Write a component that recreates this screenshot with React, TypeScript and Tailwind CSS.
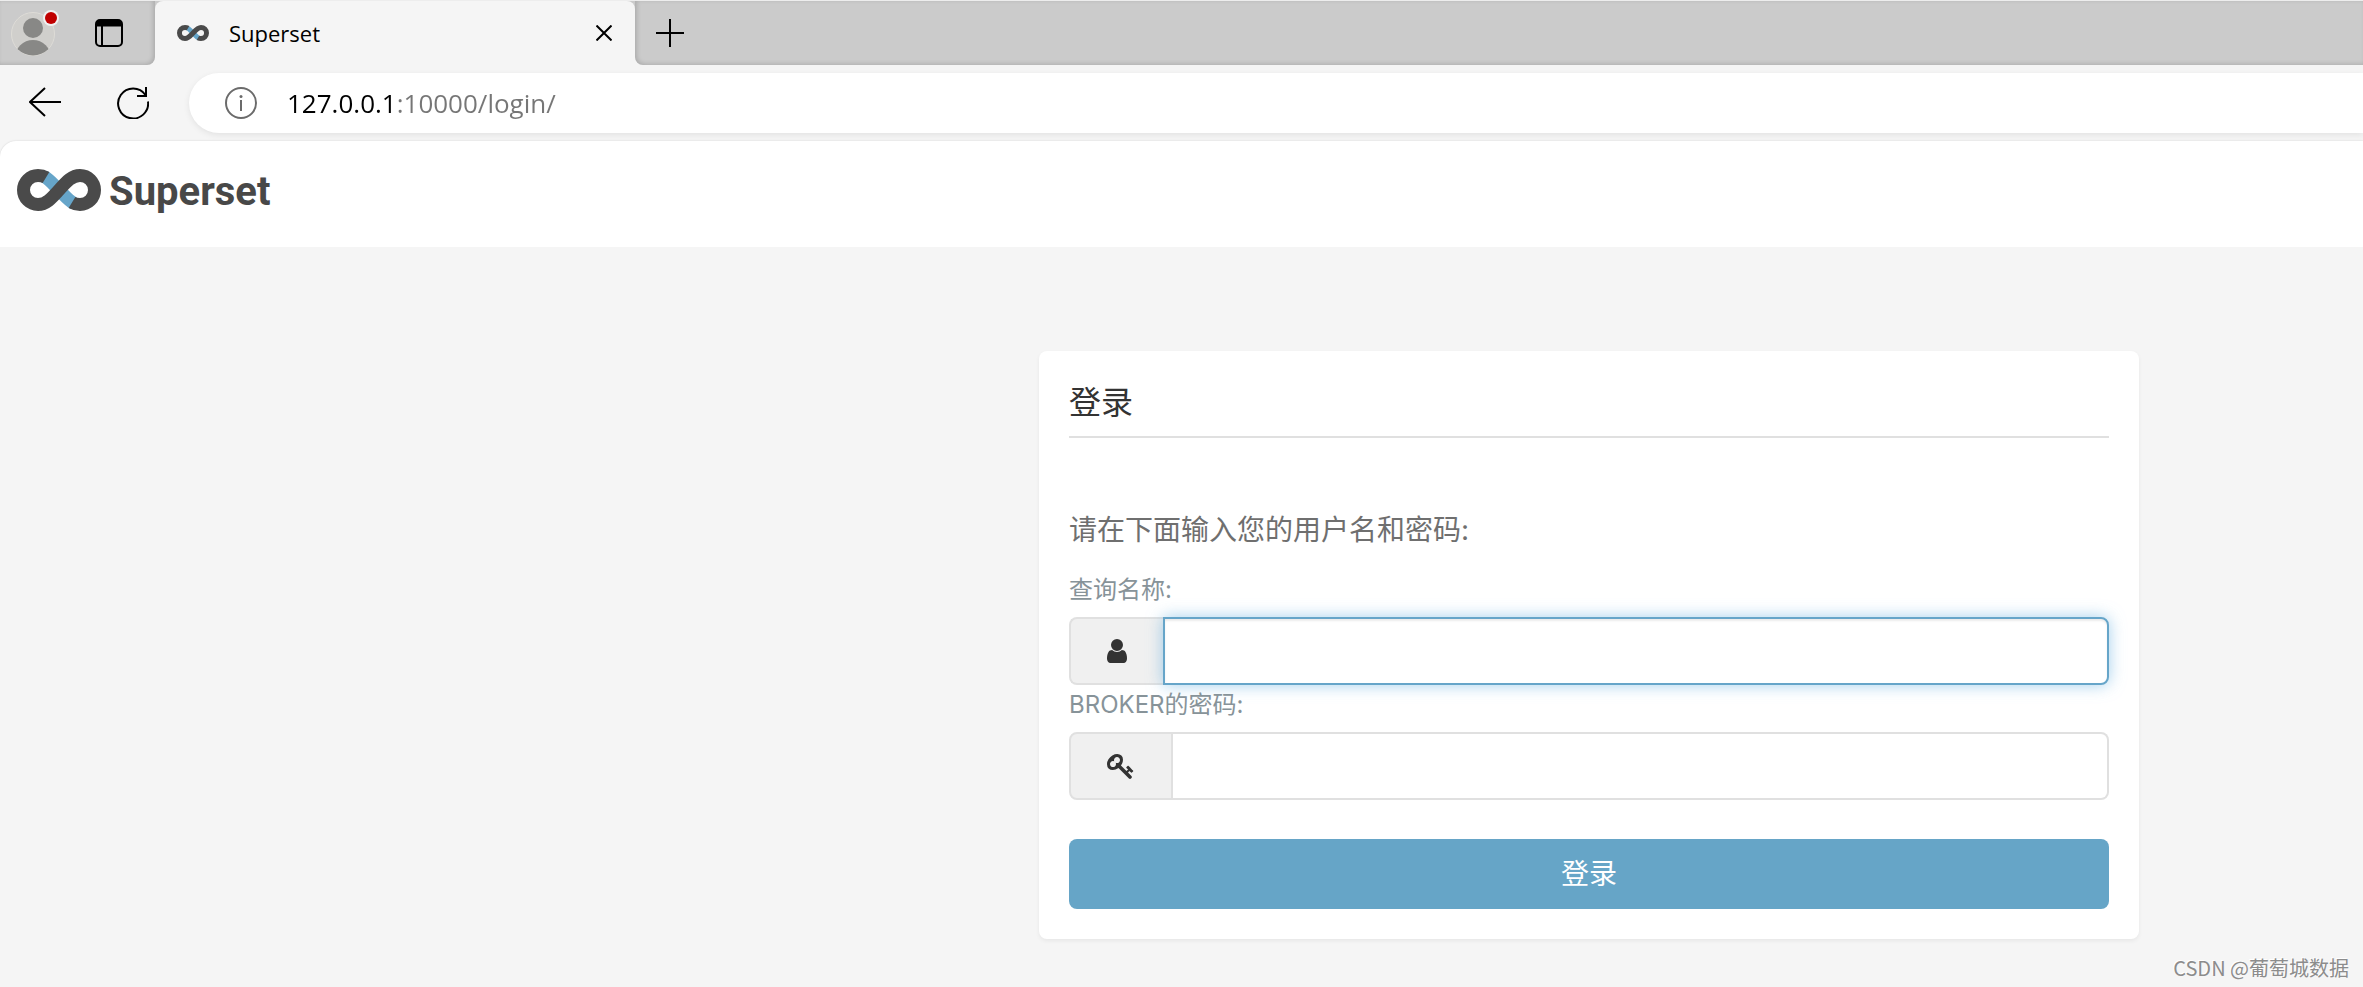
import React from "react";

function SupersetMark({ className }: { className: string }) {
  return (
    <svg className={className} viewBox="17 169 84 42" fill="none" strokeWidth="13" aria-hidden="true">
      <path d="M44 176.5C49 179 53 184 59 190S69 201 74 203.5" stroke="#66a5c9" />
      <path
        d="M46 177.5C43.500 176 41 175.500 38 175.500A14.500 14.500 0 0 0 38 204.500C46 204.500 51 199 59 190S72 175.500 80 175.500A14.500 14.500 0 0 1 80 204.500C77 204.500 74.500 204 72 202.500"
        stroke="#4a4a4a"
      />
    </svg>
  );
}

function TabStrip() {
  return (
    <div className="flex h-[65px] border-t border-[#ededed]">
      <div className="flex w-[155px] items-center rounded-br-lg bg-[#cbcbcb] pl-[11px] shadow-[inset_-2px_-1px_4px_rgba(0,0,0,0.15)]">
        <button type="button" aria-label="Profile" className="mr-[36px]">
          <svg className="h-[48px] w-[48px]" viewBox="0 0 48 48" aria-hidden="true">
            <defs>
              <clipPath id="avatar">
                <circle cx="22" cy="25" r="21.500" />
              </clipPath>
            </defs>
            <circle cx="22" cy="25" r="21.500" fill="#d0cfcc" stroke="#dedcd7" />
            <circle cx="22" cy="19" r="10" fill="#888886" />
            <circle cx="22" cy="49" r="18" fill="#888886" clipPath="url(#avatar)" />
            <circle cx="40" cy="9" r="8" fill="#f1f1f1" />
            <circle cx="40" cy="9" r="6" fill="#c00000" />
          </svg>
        </button>
        <button type="button" aria-label="Tab actions">
          <svg className="h-[28px] w-[28px]" viewBox="0 0 28 28" fill="none" stroke="#000" strokeWidth="2" aria-hidden="true">
            <rect x="1" y="1" width="26" height="26" rx="4" />
            <path d="M2 4.500h24" strokeWidth="6" />
            <path d="M7 7v20" />
          </svg>
        </button>
      </div>
      <div className="w-[480px] bg-linear-to-b from-[#cbcbcb] from-50% to-[#f5f5f5] to-50%">
        <div className="flex h-full items-center rounded-t-lg bg-[#f5f5f5] pr-[23px] pl-[22px]">
          <SupersetMark className="h-[16px] w-[32px]" />
          <span className="ml-[20px] flex-1 font-['Open_Sans','Noto_Sans',sans-serif] text-[22px] leading-[32px]">Superset</span>
          <button type="button" aria-label="Close tab">
            <svg className="h-[16px] w-[16px]" viewBox="0 0 16 16" stroke="#000" strokeWidth="2" aria-hidden="true">
              <path d="M0.500 0.500L15.500 15.500M15.500 0.500L0.500 15.500" />
            </svg>
          </button>
        </div>
      </div>
      <div className="flex flex-1 items-center rounded-bl-lg bg-[#cbcbcb] pl-[21px] shadow-[inset_2px_-1px_4px_rgba(0,0,0,0.15)]">
        <button type="button" aria-label="New tab">
          <svg className="h-[28px] w-[28px]" viewBox="0 0 28 28" stroke="#000" strokeWidth="2" aria-hidden="true">
            <path d="M14 0v28M0 14h28" />
          </svg>
        </button>
      </div>
    </div>
  );
}

function AddressRow() {
  return (
    <div className="flex h-[76px] items-center pl-[29px]">
      <button type="button" aria-label="Back" className="mr-[56px]">
        <svg className="h-[32px] w-[32px]" viewBox="0 0 32 32" fill="none" stroke="#000" strokeWidth="2" aria-hidden="true">
          <path d="M32 15H1M16 1L1 15l15 14" />
        </svg>
      </button>
      <button type="button" aria-label="Refresh" className="mr-[40px]">
        <svg className="h-[32px] w-[32px]" viewBox="0 0 32 32" fill="none" stroke="#000" strokeWidth="2" aria-hidden="true">
          <path d="M31 14.500A15 15 0 1 1 28.500 8M29 0v9h-9" />
        </svg>
      </button>
      <div className="flex h-[60px] flex-1 items-center rounded-l-full bg-white pl-[36px] shadow-[0_2px_6px_rgba(0,0,0,0.08)]">
        <svg className="h-[32px] w-[32px]" viewBox="0 0 32 32" fill="none" stroke="#6b6b6b" strokeWidth="2" aria-hidden="true">
          <circle cx="16" cy="16" r="15" />
          <path d="M16 13v11" />
          <circle cx="16" cy="9.500" r="1.500" fill="#6b6b6b" stroke="none" />
        </svg>
        <input
          type="text"
          aria-label="Address"
          defaultValue="127.0.0.1:10000/login/"
          className="ml-[30px] h-[40px] flex-1 bg-linear-to-r from-black from-[109px] to-[#767676] to-[109px] bg-clip-text font-['Open_Sans','Noto_Sans',sans-serif] text-[26px] text-transparent caret-black outline-none"
        />
      </div>
    </div>
  );
}

const addon = "flex shrink-0 items-center rounded-l-lg border-2 border-[#e0e0e0] bg-[#f0f0f0] pl-[36px]";
const label = "mb-[11px] block text-[24px] leading-8 text-[#879399]";

function LoginCard() {
  return (
    <form
      className="ml-[43.97%] w-[1100px] rounded-lg bg-white p-[30px] shadow-[0_2px_4px_rgba(0,0,0,0.06)]"
      onSubmit={(e) => e.preventDefault()}
    >
      <h1 className="border-b-2 border-[#e0e0e0] pb-[11px] text-[32px] leading-[44px] text-[#333]">登录</h1>
      <p className="mt-[72px] mb-6 text-[28px] leading-10 text-[#6f6f6f]">请在下面输入您的用户名和密码:</p>

      <label htmlFor="username" className={label}>查询名称:</label>
      <div className="flex h-[68px]">
        <div className={`${addon} w-[94px] border-r-0`}>
          <svg className="h-[28px] w-[20px]" viewBox="256 0 1280 1792" fill="#333" aria-hidden="true">
            <path d="M1536 1399q0 109-62.500 187t-150.500 78h-854q-88 0-150.500-78t-62.500-187q0-85 8.500-160.500t31.500-152 58.500-131 94-89 134.500-34.500q131 128 313 128t313-128q76 0 134.500 34.500t94 89 58.500 131 31.500 152 8.500 160.500zm-256-887q0 159-112.500 271.500t-271.500 112.500-271.500-112.500-112.500-271.500 112.500-271.500 271.500-112.500 271.500 112.500 112.500 271.500z" />
          </svg>
        </div>
        <input
          id="username"
          type="text"
          className="min-w-0 flex-1 rounded-r-lg border-2 border-[#66a5c9] bg-white px-6 text-[28px] shadow-[inset_0_2px_2px_rgba(0,0,0,0.08),0_0_16px_rgba(102,175,223,0.6)] outline-none"
        />
      </div>

      <label htmlFor="password" className={`mt-1 ${label}`}>BROKER的密码:</label>
      <div className="flex h-[68px]">
        <div className={`${addon} w-[104px]`}>
          <svg className="h-[28px] w-[28px]" viewBox="0 0 1792 1792" fill="#333" aria-hidden="true">
            <path d="M832 512q0-80-56-136t-136-56-136 56-56 136q0 42 19 83-41-19-83-19-80 0-136 56t-56 136 56 136 136 56 136-56 56-136q0-42-19-83 41 19 83 19 80 0 136-56t56-136zm851 704q0 17-49 66t-66 49q-9 0-28.500-16t-36.500-33-38.500-40-24.500-26l-96 96 220 220q28 28 28 68 0 42-39 81t-81 39q-40 0-68-28l-671-671q-176 131-365 131-163 0-265.500-102.500t-102.500-265.500q0-160 95-313t248-248 313-95q163 0 265.500 102.500t102.500 265.500q0 189-131 365l355 355 96-96q-3-3-26-24.500t-40-38.500-33-36.500-16-28.500q0-17 49-66t66-49q13 0 23 10 6 6 46 44.500t82 79.500 86.500 86 73 78 28.500 41z" />
          </svg>
        </div>
        <input
          id="password"
          type="password"
          className="min-w-0 flex-1 rounded-r-lg border-2 border-l-0 border-[#e0e0e0] bg-white px-6 text-[28px] outline-none"
        />
      </div>

      <button type="submit" className="mt-[39px] h-[70px] w-full rounded-lg bg-[#66a5c7] text-[28px] leading-10 text-white">
        登录
      </button>
    </form>
  );
}

export default function App() {
  return (
    <div className="relative flex min-h-screen flex-col overflow-hidden bg-[#f5f5f5] font-['Inter','Noto_Sans_CJK_SC',sans-serif]">
      <TabStrip />
      <AddressRow />
      <header className="flex h-[106px] items-start rounded-tl-2xl bg-white pt-[25px] pl-[17px] shadow-[0_0_2px_rgba(0,0,0,0.15)]">
        <a href="/" className="flex items-center gap-2">
          <SupersetMark className="h-[42px] w-[84px]" />
          <span className="pt-1 font-['Roboto',sans-serif] text-[40px] leading-[44px] font-bold text-[#484848]">Superset</span>
        </a>
      </header>
      <main className="flex-1 bg-[#f5f5f5] pt-[104px]">
        <LoginCard />
      </main>
      <div className="absolute right-[14px] bottom-1 font-['Noto_Sans_CJK_SC',sans-serif] text-[20px] leading-[30px] text-[#8c8c8c] [text-shadow:-1px_-1px_0_#fff]">
        CSDN @葡萄城数据
      </div>
    </div>
  );
}
